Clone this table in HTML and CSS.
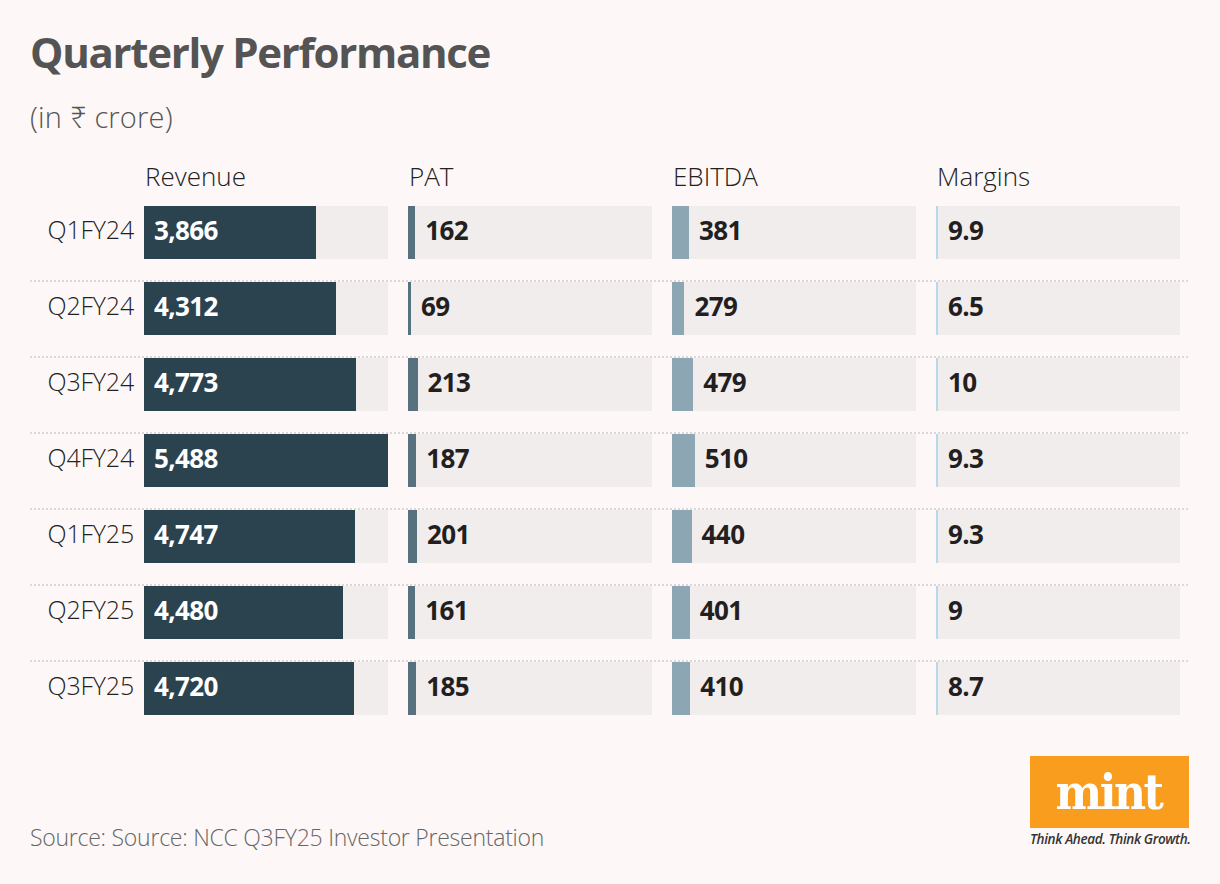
FILE: index.html
```html
<!DOCTYPE html>
<html lang="en">
<head>
<meta charset="utf-8">
<title>Quarterly Performance</title>
<link rel="stylesheet" href="styles.css">
</head>
<body>
<main class="page">
  <h1 class="title">Quarterly Performance</h1>
  <p class="subtitle">(in ₹ crore)</p>

  <section class="chart">
    <div class="head-row">
      <div class="label"></div>
      <div class="cells">
        <div class="head">Revenue</div>
        <div class="head">PAT</div>
        <div class="head">EBITDA</div>
        <div class="head">Margins</div>
      </div>
    </div>

    <div class="row">
      <div class="label">Q1FY24</div>
      <div class="cells">
        <div class="track"><div class="bar rev" style="width:171.9px"><span class="val inside">3,866</span></div></div>
        <div class="track"><div class="bar pat" style="width:7.2px"></div><span class="val">162</span></div>
        <div class="track"><div class="bar ebitda" style="width:16.9px"></div><span class="val">381</span></div>
        <div class="track"><div class="bar margin"></div><span class="val">9.9</span></div>
      </div>
    </div>
    <div class="row">
      <div class="label">Q2FY24</div>
      <div class="cells">
        <div class="track"><div class="bar rev" style="width:191.7px"><span class="val inside">4,312</span></div></div>
        <div class="track"><div class="bar pat" style="width:3.1px"></div><span class="val">69</span></div>
        <div class="track"><div class="bar ebitda" style="width:12.4px"></div><span class="val">279</span></div>
        <div class="track"><div class="bar margin"></div><span class="val">6.5</span></div>
      </div>
    </div>
    <div class="row">
      <div class="label">Q3FY24</div>
      <div class="cells">
        <div class="track"><div class="bar rev" style="width:212.2px"><span class="val inside">4,773</span></div></div>
        <div class="track"><div class="bar pat" style="width:9.5px"></div><span class="val">213</span></div>
        <div class="track"><div class="bar ebitda" style="width:21.3px"></div><span class="val">479</span></div>
        <div class="track"><div class="bar margin"></div><span class="val">10</span></div>
      </div>
    </div>
    <div class="row">
      <div class="label">Q4FY24</div>
      <div class="cells">
        <div class="track"><div class="bar rev" style="width:244px"><span class="val inside">5,488</span></div></div>
        <div class="track"><div class="bar pat" style="width:8.3px"></div><span class="val">187</span></div>
        <div class="track"><div class="bar ebitda" style="width:22.7px"></div><span class="val">510</span></div>
        <div class="track"><div class="bar margin"></div><span class="val">9.3</span></div>
      </div>
    </div>
    <div class="row">
      <div class="label">Q1FY25</div>
      <div class="cells">
        <div class="track"><div class="bar rev" style="width:211px"><span class="val inside">4,747</span></div></div>
        <div class="track"><div class="bar pat" style="width:8.9px"></div><span class="val">201</span></div>
        <div class="track"><div class="bar ebitda" style="width:19.6px"></div><span class="val">440</span></div>
        <div class="track"><div class="bar margin"></div><span class="val">9.3</span></div>
      </div>
    </div>
    <div class="row">
      <div class="label">Q2FY25</div>
      <div class="cells">
        <div class="track"><div class="bar rev" style="width:199.2px"><span class="val inside">4,480</span></div></div>
        <div class="track"><div class="bar pat" style="width:7.2px"></div><span class="val">161</span></div>
        <div class="track"><div class="bar ebitda" style="width:17.8px"></div><span class="val">401</span></div>
        <div class="track"><div class="bar margin"></div><span class="val">9</span></div>
      </div>
    </div>
    <div class="row">
      <div class="label">Q3FY25</div>
      <div class="cells">
        <div class="track"><div class="bar rev" style="width:209.9px"><span class="val inside">4,720</span></div></div>
        <div class="track"><div class="bar pat" style="width:8.2px"></div><span class="val">185</span></div>
        <div class="track"><div class="bar ebitda" style="width:18.2px"></div><span class="val">410</span></div>
        <div class="track"><div class="bar margin"></div><span class="val">8.7</span></div>
      </div>
    </div>
  </section>

  <footer class="footer">
    <p class="source">Source: Source: NCC Q3FY25 Investor Presentation</p>
    <div class="brand">
      <div class="logo"><span class="logo-text">mint</span></div>
      <div class="tagline">Think Ahead. Think Growth.</div>
    </div>
  </footer>
</main>
</body>
</html>
```
FILE: styles.css
```css
* { box-sizing: border-box; }

html, body {
  margin: 0;
  padding: 0;
  background: #fdf8f7;
}

body {
  font-family: "Open Sans", "Noto Sans", "DejaVu Sans", sans-serif;
  color: #231f20;
}

.page {
  width: 1220px;
  height: 884px;
  padding: 27px 31px 0 30px;
}

.title {
  margin: 0;
  font-size: 42px;
  line-height: 50px;
  font-weight: 700;
  color: #545454;
  letter-spacing: -1.3px;
}

.subtitle {
  margin: 23px 0 0;
  font-size: 29px;
  line-height: 34px;
  font-weight: 300;
  color: #555;
  letter-spacing: 0.2px;
}

.chart {
  margin-top: 26px;
}

.head-row,
.row {
  display: flex;
  width: 1158px;
}

.label {
  width: 104px;
  flex: none;
  text-align: right;
  font-size: 25px;
  font-weight: 300;
  color: #222;
  letter-spacing: -0.2px;
}

.cells {
  display: flex;
  gap: 20px;
  margin-left: 10px;
}

.head {
  width: 244px;
  font-size: 26px;
  line-height: 32px;
  font-weight: 300;
  color: #222;
  padding-left: 1px;
}

.head-row {
  margin-bottom: 14px;
}

.row {
  align-items: flex-start;
  height: 76px;
}

.row:not(:last-child) {
  border-bottom: 2px dotted #ddd8d7;
}

.row .cells,
.row .label {
  height: 53px;
}

.row .label {
  line-height: 47px;
}

.track {
  width: 244px;
  height: 53px;
  background: #f2eded;
  display: flex;
  align-items: center;
}

.bar {
  height: 53px;
  flex: none;
  display: flex;
  align-items: center;
}

.bar.rev { background: #2b424f; }
.bar.pat { background: #58717e; }
.bar.ebitda { background: #8ca6b4; }
.bar.margin { background: #b9d8ea; width: 2px; }

.val {
  margin-left: 10px;
  padding-bottom: 6px;
  font-size: 26px;
  font-weight: 700;
  color: #231f20;
  letter-spacing: -0.6px;
}

.val.inside {
  color: #fff;
}

.footer {
  margin-top: 18px;
  display: flex;
  justify-content: space-between;
  align-items: flex-end;
}

.source {
  margin: 0 0 -5px;
  font-size: 23px;
  line-height: 30px;
  font-weight: 300;
  color: #666;
  letter-spacing: -0.25px;
}

.brand {
  display: flex;
  flex-direction: column;
  align-items: stretch;
  width: 159px;
}

.logo {
  height: 72px;
  background: #f99d1f;
  display: flex;
  align-items: center;
  justify-content: center;
}

.logo-text {
  font-family: "DejaVu Serif", "Liberation Serif", serif;
  font-stretch: condensed;
  font-weight: 700;
  font-size: 49px;
  line-height: 1;
  color: #fff;
  letter-spacing: -2.5px;
  padding-top: 0;
  margin-right: 2px;
}

.tagline {
  margin-top: 3px;
  font-size: 13.5px;
  line-height: 16px;
  font-style: italic;
  font-weight: 600;
  color: #333;
  letter-spacing: -0.35px;
  white-space: nowrap;
}
```
